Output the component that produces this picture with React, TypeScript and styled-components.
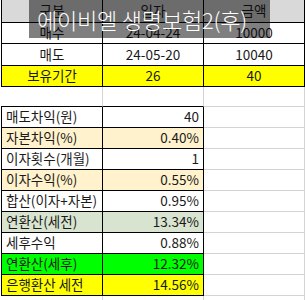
import React from "react";
import styled, { createGlobalStyle } from "styled-components";

const GlobalStyle = createGlobalStyle`
  body {
    margin: 0;
    background: #ffffff;
    font-family: "Noto Sans CJK KR", "Noto Sans", sans-serif;
  }
`;

type Tone = "plain" | "head" | "yellow" | "peach" | "mint" | "green";
type Line = "black" | "grid";

const fills: Record<Tone, string> = {
  plain: "#ffffff",
  head: "#d9d9d9",
  yellow: "#ffff00",
  peach: "#fff2cc",
  mint: "#d8e4d0",
  green: "#00ff00",
};

const lines: Record<Line, string> = {
  black: "#000000",
  grid: "#d4d4d4",
};

const Sheet = styled.div`
  position: relative;
  width: 305px;
  height: 300px;
  overflow: hidden;
  padding-left: 1px;
  box-sizing: border-box;
`;

const Row = styled.div<{ $h: number }>`
  display: grid;
  grid-template-columns: 102px 101px 101px;
  height: ${(p) => p.$h}px;
`;

const Cell = styled.div<{
  $tone?: Tone;
  $side?: Line;
  $under?: Line;
  $left?: boolean;
  $align?: "left" | "center" | "right";
}>`
  box-sizing: border-box;
  display: flex;
  align-items: center;
  justify-content: ${(p) =>
    p.$align === "left" ? "flex-start" : p.$align === "right" ? "flex-end" : "center"};
  padding: 0 ${(p) => (p.$align === "right" ? "4px" : "0")} 0
    ${(p) => (p.$align === "left" ? "4px" : "0")};
  background: ${(p) => fills[p.$tone || "plain"]};
  border-right: 1px solid ${(p) => lines[p.$side || "black"]};
  border-bottom: 1px solid ${(p) => lines[p.$under || p.$side || "black"]};
  border-left: ${(p) => (p.$left ? "1px solid #000000" : "none")};
  font-size: 13.5px;
  color: #1a1a1a;
  white-space: nowrap;
  line-height: 1;
`;

const Banner = styled.div`
  position: absolute;
  left: 29px;
  top: 0;
  width: 241px;
  height: 38px;
  background: rgba(0, 0, 0, 0.5);
  color: #ffffff;
  font-size: 22px;
  font-weight: 300;
  display: flex;
  align-items: center;
  padding-left: 8px;
  box-sizing: border-box;
  white-space: nowrap;
  letter-spacing: -0.2px;
`;

const top = [
  { h: 23, tone: "head" as Tone, cells: ["구분", "일자", "금액"] },
  { h: 21, tone: "plain" as Tone, cells: ["매수", "24-04-24", "10000"] },
  { h: 22, tone: "plain" as Tone, cells: ["매도", "24-05-20", "10040"] },
  { h: 21, tone: "yellow" as Tone, cells: ["보유기간", "26", "40"] },
];

const result: { label: string; value: string; tone: Tone }[] = [
  { label: "매도차익(원)", value: "40", tone: "plain" },
  { label: "자본차익(%)", value: "0.40%", tone: "peach" },
  { label: "이자횟수(개월)", value: "1", tone: "plain" },
  { label: "이자수익(%)", value: "0.55%", tone: "peach" },
  { label: "합산(이자+자본)", value: "0.95%", tone: "plain" },
  { label: "연환산(세전)", value: "13.34%", tone: "mint" },
  { label: "세후수익", value: "0.88%", tone: "plain" },
  { label: "연환산(세후)", value: "12.32%", tone: "green" },
  { label: "은행환산 세전", value: "14.56%", tone: "yellow" },
];

export default function App() {
  return (
    <>
      <GlobalStyle />
      <Sheet>
        {top.map((r, i) => (
          <Row key={i} $h={r.h}>
            {r.cells.map((c, j) => (
              <Cell key={j} $tone={r.tone} $left={j === 0}>
                {c}
              </Cell>
            ))}
          </Row>
        ))}
        <Row $h={20}>
          <Cell $side="grid" $under="black" />
          <Cell $side="grid" $under="black" />
          <Cell $side="grid" />
        </Row>
        {result.map((r, i) => (
          <Row key={i} $h={21}>
            <Cell $tone={r.tone} $left $align="left">
              {r.label}
            </Cell>
            <Cell $tone={r.tone} $align="right">
              {r.value}
            </Cell>
            <Cell $side="grid" />
          </Row>
        ))}
        <Row $h={10}>
          <Cell $side="grid" />
          <Cell $side="grid" />
          <Cell $side="grid" />
        </Row>
        <Banner>에이비엘 생명보험2(후)</Banner>
      </Sheet>
    </>
  );
}
